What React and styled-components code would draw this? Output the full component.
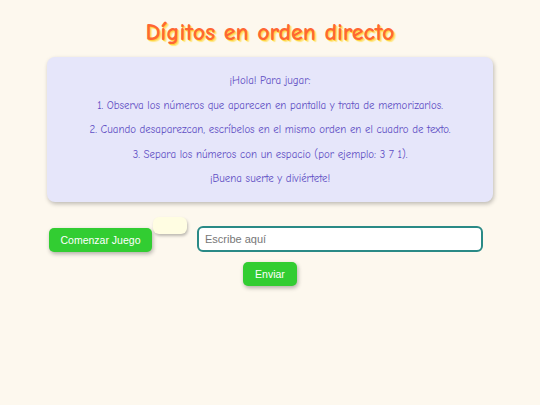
import React, {useState} from 'react';
import styled, {createGlobalStyle} from 'styled-components';

const GlobalStyle = createGlobalStyle`
  html, body {
    margin: 0;
    padding: 0;
    background-color: #fdf8ee;
  }
  body {
    font-family: "Comic Sans MS", "Comic Neue", cursive;
  }
`;

const Page = styled.div`
  width: 540px;
  min-height: 405px;
  box-sizing: border-box;
  padding-top: 16px;
  display: flex;
  flex-direction: column;
  align-items: center;
`;

const Title = styled.h1`
  margin: 0;
  font-family: "Comic Sans MS", "Comic Neue", cursive;
  font-size: 24px;
  font-weight: bold;
  line-height: 32px;
  color: #ff6633;
  text-shadow: 1px 1px 0 #ffd23f, 2px 2px 1px #ffe680;
`;

const Instructions = styled.div`
  margin-top: 9px;
  width: 446px;
  box-sizing: border-box;
  padding: 12px 10px 10px;
  background-color: #e6e6fa;
  border-radius: 8px;
  box-shadow: 1px 2px 4px rgba(0, 0, 0, 0.25);
  text-align: center;
`;

const Line = styled.p`
  margin: 0;
  font-size: 10.9px;
  line-height: 24.5px;
  color: #5f4fc4;
`;

const Controls = styled.div`
  margin-top: 15px;
  width: 446px;
  display: flex;
  flex-wrap: wrap;
  justify-content: center;
  align-items: flex-end;
  row-gap: 5px;
`;

const Button = styled.button`
  font-family: "Liberation Sans", Arial, sans-serif;
  font-size: 10.5px;
  color: #ffffff;
  background-color: #32cd32;
  border: none;
  border-radius: 5px;
  height: 24px;
  width: ${p => p.$w}px;
  padding: 0;
  box-shadow: 1px 2px 4px rgba(0, 0, 0, 0.3);
  cursor: pointer;
`;

const Display = styled.div`
  width: 34px;
  height: 17px;
  margin: 0 10px 18px 1px;
  background-color: #fffde2;
  border-radius: 6px;
  box-shadow: 1px 2px 3px rgba(0, 0, 0, 0.25);
`;

const Input = styled.input`
  width: 286px;
  height: 26px;
  margin-right: 8px;
  box-sizing: border-box;
  padding: 0 6px;
  border: 2px solid #2a8a86;
  border-radius: 6px;
  background: #ffffff;
  font-family: "Liberation Sans", Arial, sans-serif;
  font-size: 11px;
  color: #333;
  outline: none;
  &::placeholder {
    color: #777;
  }
`;

const BreakRow = styled.div`
  flex-basis: 100%;
  height: 0;
`;

export default function App() {
  const [value, setValue] = useState('');
  return (
    <>
      <GlobalStyle />
      <Page>
        <Title>Dígitos en orden directo</Title>
        <Instructions>
          <Line>¡Hola! Para jugar:</Line>
          <Line>1. Observa los números que aparecen en pantalla y trata de memorizarlos.</Line>
          <Line>2. Cuando desaparezcan, escríbelos en el mismo orden en el cuadro de texto.</Line>
          <Line>3. Separa los números con un espacio (por ejemplo: 3 7 1).</Line>
          <Line>¡Buena suerte y diviértete!</Line>
        </Instructions>
        <Controls>
          <Button $w={103}>Comenzar Juego</Button>
          <Display />
          <Input
            placeholder="Escribe aquí"
            value={value}
            onChange={e => setValue(e.target.value)}
          />
          <BreakRow />
          <Button $w={54}>Enviar</Button>
        </Controls>
      </Page>
    </>
  );
}
